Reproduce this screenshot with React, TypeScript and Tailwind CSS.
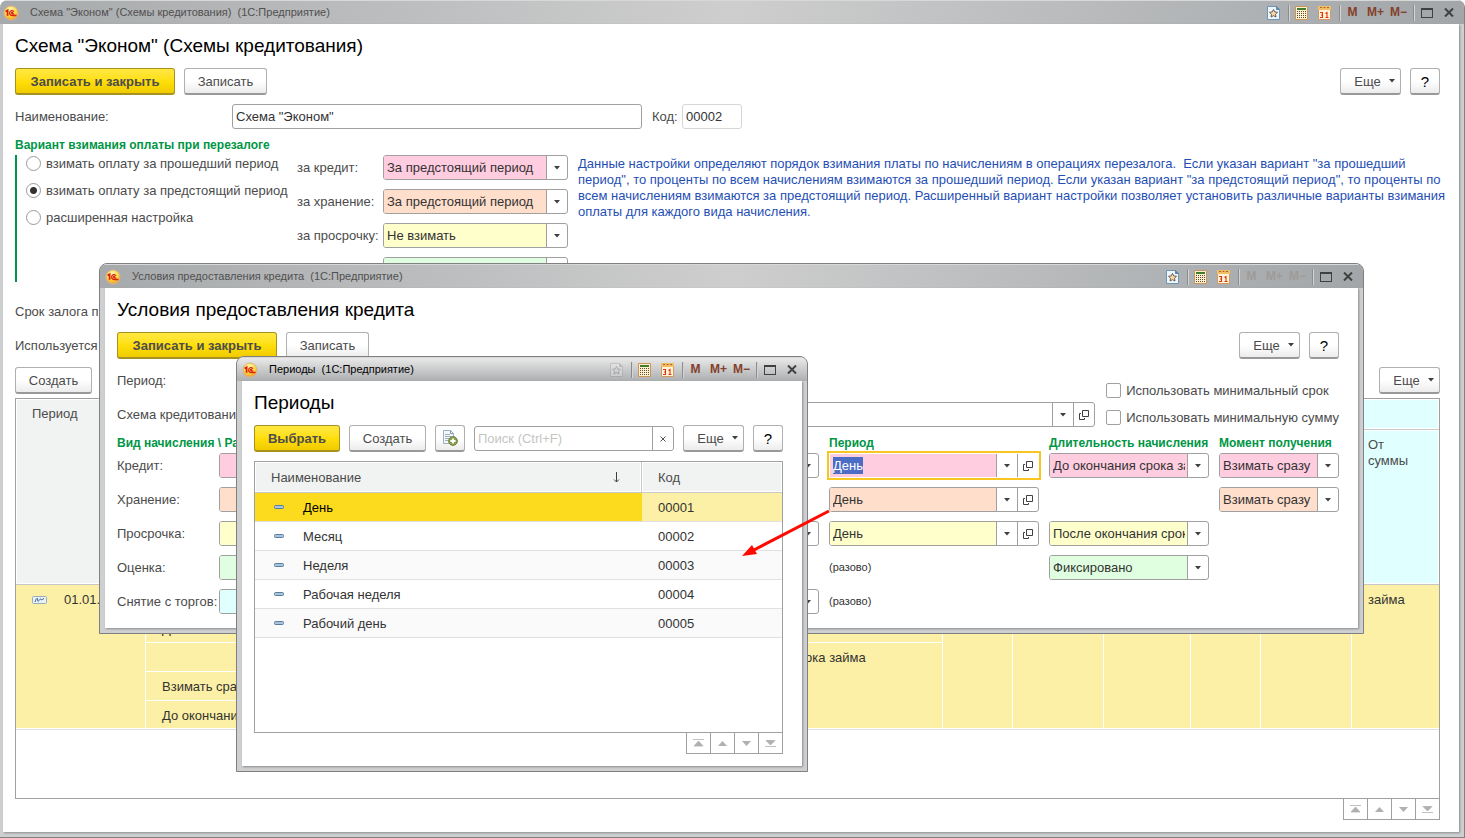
import React, { useEffect, useRef } from 'react'
import clsx from 'clsx'

type Tone = 'pink' | 'peach' | 'yellow' | 'green' | 'cyan' | 'white'

const TONES: Record<Tone, string> = {
  pink: 'bg-[#ffcce0]',
  peach: 'bg-[#ffdfcc]',
  yellow: 'bg-[#ffffcc]',
  green: 'bg-[#e0ffe0]',
  cyan: 'bg-[#e0ffff]',
  white: 'bg-white'
}

const PERIODS = [
  { code: '00001', name: 'День' },
  { code: '00002', name: 'Месяц' },
  { code: '00003', name: 'Неделя' },
  { code: '00004', name: 'Рабочая неделя' },
  { code: '00005', name: 'Рабочий день' }
]

// ---------- icons ----------

function Logo() {
  return (
    <svg className="h-4 w-4 shrink-0" viewBox="0 0 16 16" aria-hidden="true">
      <defs>
        <radialGradient id="logo" cx="0.45" cy="0.3" r="0.7">
          <stop offset="0" stopColor="#fff6c0" />
          <stop offset="0.55" stopColor="#ffdc4a" />
          <stop offset="1" stopColor="#f09a28" />
        </radialGradient>
      </defs>
      <circle cx="8" cy="8" r="7" fill="url(#logo)" stroke="#d9b489" />
      <path d="M2.6 6.6 4.6 5.4V10.8" fill="none" stroke="#d8200c" strokeWidth="1.8" />
      <path d="M11 6.8C10 4.900 6.700 5.200 6.700 8c0 1.900 1.200 2.500 2.600 2.500H13.500M10 7.700C9.300 7 8.600 7.300 8.600 8c0 .6.4.8 1 .8h1.600" fill="none" stroke="#d8200c" strokeWidth="1.3" />
    </svg>
  )
}

function StarIcon({ muted }: { muted?: boolean }) {
  return (
    <svg className={clsx('h-[14px] w-[13px]', muted && 'opacity-30 grayscale')} viewBox="0 0 13 14" aria-hidden="true">
      <path d="M.5.5h9l3 3v10H.5z" fill="#eef6fc" stroke="#6f95b5" />
      <path d="M9.5.5v3h3z" fill="#5d86ab" stroke="#5d86ab" />
      <path d="m6.5 3.4 1.2 2.5 2.8.4-2 1.9.5 2.8-2.5-1.3L4 11l.5-2.8-2-1.9 2.8-.4z" fill="#fbd9a6" stroke="#5b5148" strokeWidth="0.9" />
    </svg>
  )
}

function CalcIcon() {
  return (
    <svg className="h-[14px] w-[13px]" viewBox="0 0 13 14" aria-hidden="true">
      <path d="M.5.5h12v13H.5z" fill="#fff0cf" stroke="#c9955a" />
      <path d="M2 2h9v2H2z" fill="#3f7d2c" />
      <path d="M2 5.500h9M2 7.500h9M2 9.500h9M2 11.500h9" stroke="#5d4a33" strokeDasharray="1 1" />
    </svg>
  )
}

function CalendarIcon() {
  return (
    <svg className="h-[14px] w-[13px]" viewBox="0 0 13 14" aria-hidden="true">
      <path d="M.5 1.5h12v12H.5z" fill="#fff3da" stroke="#cf9b62" />
      <path d="M0 0h13v4H0z" fill="#f3bd66" />
      <path d="M2 1h2v1H2zM5.500 1h2v1h-2zM9 1h2v1H9z" fill="#a8672c" />
      <path d="M2 6.500h2.500v5H2M3 9h1.500M7.500 7.500l1.500-1v5M7.500 11.500h3" fill="none" stroke="#e0330f" strokeWidth="1.1" />
    </svg>
  )
}

function Caret() {
  return (
    <svg className="h-1 w-[6px] shrink-0" viewBox="0 0 6 4" aria-hidden="true">
      <path d="M0 0h6L3 3.5z" fill="#404040" />
    </svg>
  )
}

function OpenIcon() {
  return (
    <svg className="h-[10px] w-[10px]" viewBox="0 0 10 10" fill="none" stroke="#404040" aria-hidden="true">
      <path d="M3.500.5h6v6h-6zM2 3.500H.5v6h5V8" />
    </svg>
  )
}

function CopyDocIcon() {
  return (
    <svg className="h-4 w-4" viewBox="0 0 16 16" aria-hidden="true">
      <path d="M1.5.5h7l3 3v10h-10z" fill="#f3f7fa" stroke="#9db1c2" />
      <path d="M8.5.5v3h3" fill="none" stroke="#7f9ab0" />
      <path d="M3 4.5h5M3 6.5h6M3 8.5h4M3 10.5h3" stroke="#9db1c2" />
      <circle cx="11" cy="11" r="4.4" fill="#8aa04d" stroke="#6e7f45" />
      <path d="M11 8.4v5.2M8.4 11h5.2" stroke="#fff" strokeWidth="1.8" />
    </svg>
  )
}

function DashIcon() {
  return (
    <svg className="h-1 w-[10px]" viewBox="0 0 10 4" aria-hidden="true">
      <rect x="0.5" y="0.5" width="9" height="3" rx="1" fill="#a9c4da" stroke="#587d9d" />
    </svg>
  )
}

// ---------- controls ----------

interface PushButtonProps {
  children: React.ReactNode
  primary?: boolean
  className?: string
  label?: string
}

function PushButton({ children, primary, className, label }: PushButtonProps) {
  return (
    <button
      type="button"
      aria-label={label}
      className={clsx(
        'flex h-[27px] shrink-0 items-center justify-center rounded-[3px] border border-b-2 whitespace-nowrap',
        primary
          ? 'border-[#a8921f] bg-linear-to-b from-[#ffe840] via-[#ffdf0a] to-[#f0cb00] font-bold text-[#4d4d4d]'
          : 'border-[#b0b0b0] border-b-[#999] bg-linear-to-b from-white via-white to-[#ececec] text-[#4b4b4b]',
        className
      )}
    >
      {children}
    </button>
  )
}

function MoreButton() {
  return (
    <PushButton className="w-[61px] gap-2 pl-2">
      Еще <Caret />
    </PushButton>
  )
}

interface FieldProps {
  id?: string
  label?: string
  value?: string
  tone?: Tone
  className?: string
}

function SelectField({ id, label, value = '', tone = 'white', className }: FieldProps) {
  return (
    <div className={clsx('flex h-[25px] overflow-hidden rounded-[3px] border border-[#a0a0a0] bg-white', className)}>
      <select
        id={id}
        aria-label={label}
        defaultValue={value}
        className={clsx('min-w-0 flex-1 appearance-none pr-[2px] pl-[3px] text-[#333] outline-none', TONES[tone])}
      >
        <option>{value}</option>
      </select>
      <span className="pointer-events-none flex w-[21px] shrink-0 items-center justify-center border-l border-[#a0a0a0]">
        <Caret />
      </span>
    </div>
  )
}

function RefField({ id, label, value = '', tone = 'white', className, active }: FieldProps & { active?: boolean }) {
  const ref = useRef<HTMLInputElement>(null)

  useEffect(() => {
    if (active) {
      ref.current?.focus()
      ref.current?.select()
    }
  }, [active])

  return (
    <div
      className={clsx(
        'flex h-[25px] overflow-hidden border bg-white',
        active ? 'border-white outline-2 outline-[#f9c621]' : 'rounded-[3px] border-[#a0a0a0]',
        className
      )}
    >
      <input
        ref={ref}
        id={id}
        aria-label={label}
        defaultValue={value}
        className={clsx('min-w-0 flex-1 pl-[3px] text-[#333] outline-none selection:bg-[#4d6cc3] selection:text-white', TONES[tone])}
      />
      <button type="button" aria-label="Выбрать из списка" className="flex w-[21px] shrink-0 items-center justify-center border-l border-[#a0a0a0]">
        <Caret />
      </button>
      <button type="button" aria-label="Открыть" className="flex w-[21px] shrink-0 items-center justify-center border-l border-[#a0a0a0]">
        <OpenIcon />
      </button>
    </div>
  )
}

function Radio({ label, checked }: { label: string; checked?: boolean }) {
  return (
    <label className="flex h-[17px] items-center gap-[5px] whitespace-nowrap">
      <input
        type="radio"
        name="charge"
        defaultChecked={checked}
        className="h-[15px] w-[15px] shrink-0 appearance-none rounded-full border border-[#999] bg-white checked:bg-[radial-gradient(circle,#333_3px,#fff_4px)]"
      />
      {label}
    </label>
  )
}

function Check({ label }: { label: string }) {
  return (
    <label className="flex h-[27px] items-center gap-[5px] whitespace-nowrap">
      <input type="checkbox" className="h-[15px] w-[15px] shrink-0 appearance-none rounded-[2px] border border-[#a0a0a0] bg-white" />
      {label}
    </label>
  )
}

function Caption({ children }: { children: React.ReactNode }) {
  return <div className="text-[12px] leading-4 font-bold whitespace-nowrap text-[#009646]">{children}</div>
}

const PAGER = [
  { label: 'В начало', d: 'M0 .5h11M5.5 2 10 7H1z', line: true },
  { label: 'Вверх', d: 'M5.5 2 10 7H1z' },
  { label: 'Вниз', d: 'M1 2h9L5.5 7z' },
  { label: 'В конец', d: 'M0 7.5h11M1 1.5h9L5.5 6z', line: true }
]

function Pager() {
  return (
    <div className="flex justify-end">
      <div className="flex border-l border-[#a0a0a0]">
        {PAGER.map((b) => (
          <button
            key={b.label}
            type="button"
            aria-label={b.label}
            className="flex h-[21px] w-6 items-center justify-center border-r border-b border-[#a0a0a0]"
          >
            <svg className="h-2 w-[11px]" viewBox="0 0 11 8" aria-hidden="true">
              <path d={b.d} fill="#b0b0b0" stroke={b.line ? '#b0b0b0' : 'none'} strokeWidth="0.8" />
            </svg>
          </button>
        ))}
      </div>
    </div>
  )
}

// ---------- window frame ----------

const CELL = 'flex h-6 w-[23px] shrink-0 items-center justify-center'

function Separator() {
  return <span className="ml-[3px] h-4 w-[2px] border-r border-l border-r-[#d4d4d4] border-l-[#8c8c8c]" />
}

interface WindowProps {
  title: string
  active?: boolean
  mutedStar?: boolean
  mutedMemory?: boolean
  className?: string
  barClass?: string
  bodyClass?: string
  children: React.ReactNode
}

function AppWindow({ title, active, mutedStar, mutedMemory, className, barClass, bodyClass, children }: WindowProps) {
  return (
    <section
      aria-label={title}
      className={clsx('flex flex-col overflow-hidden rounded-t-lg border-[#808080] bg-[#cdcfd0]', className)}
    >
      <header
        className={clsx(
          'flex h-6 shrink-0 items-center border-t border-[#d8d8d8] pr-[5px] text-[11px]',
          active
            ? 'bg-linear-to-b from-[#e9e9e9] to-[#acaeb0] text-black'
            : 'bg-linear-to-r from-[#a7aaac] via-[#cecece] to-[#a2a6a9] text-[#505050]',
          barClass
        )}
      >
        <Logo />
        <span className="flex-1 pl-[11px] whitespace-pre">{title}</span>
        <button type="button" aria-label="Избранное" className={CELL}><StarIcon muted={mutedStar} /></button>
        <Separator />
        <button type="button" aria-label="Калькулятор" className={CELL}><CalcIcon /></button>
        <button type="button" aria-label="Календарь" className={CELL}><CalendarIcon /></button>
        <Separator />
        {['M', 'M+', 'M−'].map((m) => (
          <button key={m} type="button" className={clsx(CELL, 'text-[12px] font-bold', mutedMemory ? 'text-[#9f9b97]' : 'text-[#84402a]')}>
            {m}
          </button>
        ))}
        <Separator />
        <button type="button" aria-label="Развернуть" className={CELL}>
          <span className="h-[10px] w-3 border border-t-2 border-[#404040]" />
        </button>
        <button type="button" aria-label="Закрыть" className="flex h-6 w-[21px] items-center justify-center">
          <svg className="h-[9px] w-[10px]" viewBox="0 0 10 9" aria-hidden="true">
            <path d="m1 .5 8 8m0-8-8 8" stroke="#404040" strokeWidth="2" />
          </svg>
        </button>
      </header>
      <div className={clsx('flex flex-1 flex-col bg-white shadow-[1px_1px_2px_#8a8d90]', bodyClass)}>{children}</div>
    </section>
  )
}

// ---------- main form ----------

const CHARGES: { id: string; label?: string; value: string; tone: Tone }[] = [
  { id: 'credit', label: 'за кредит:', value: 'За предстоящий период', tone: 'pink' },
  { id: 'storage', label: 'за хранение:', value: 'За предстоящий период', tone: 'peach' },
  { id: 'overdue', label: 'за просрочку:', value: 'Не взимать', tone: 'yellow' },
  { id: 'estimate', value: '', tone: 'green' }
]

function TermsTable() {
  const head = 'border-r border-b border-[#c8c8c8] p-0 align-top font-normal shadow-[inset_0_0_0_1px_#fff]'
  const cell = 'border-r border-b border-white p-0 align-top'
  return (
    <div className="flex-1 border border-[#a0a0a0]">
      <table className="w-full table-fixed border-separate border-spacing-0 text-left leading-4">
        <colgroup>
          <col className="w-[130px]" />
          <col className="w-[543px]" />
          <col />
          <col className="w-[70px]" />
          <col className="w-[91px]" />
          <col className="w-[87px]" />
          <col className="w-[70px]" />
          <col className="w-[91px]" />
          <col className="w-[87px]" />
        </colgroup>
        <thead className="text-[#4b4b4b]">
          <tr className="h-[31px]">
            <th rowSpan={2} className={clsx(head, 'bg-[#f1f3f2]')}>
              <div className="pt-[7px] pl-4">Период</div>
            </th>
            <th colSpan={2} rowSpan={2} className={clsx(head, 'bg-[#f1f3f2]')} />
            <th colSpan={6} className={clsx(head, 'border-r-0 bg-[#e0ffff]')} />
          </tr>
          <tr className="h-[155px]">
            {[0, 1, 2, 3, 4].map((i) => (
              <th key={i} className={clsx(head, 'bg-[#e0ffff]')} />
            ))}
            <th className={clsx(head, 'border-r-0 bg-[#e0ffff]')}>
              <div className="pt-[7px] pl-4">От<br />суммы</div>
            </th>
          </tr>
        </thead>
        <tbody className="bg-[#fcf0a6] text-[#333]">
          <tr className="h-[29px]">
            <td rowSpan={5} className={cell}>
              <div className="flex items-center gap-[17px] pt-[7px] pl-4">
                <svg className="h-2 w-[15px]" viewBox="0 0 15 8" aria-hidden="true">
                  <rect x="0.5" y="0.5" width="14" height="7" rx="1" fill="#e9f1f7" stroke="#9badbb" />
                  <path d="M3 6c1-3 2-4 2.500-3.500S5 6 6.500 5 8.500 2 9 3s0 1.500 3-.5" fill="none" stroke="#2f5f86" />
                </svg>
                01.01.
              </div>
            </td>
            <td className={cell} />
            <td className={cell} />
            <td rowSpan={5} className={cell} />
            <td rowSpan={5} className={cell} />
            <td rowSpan={5} className={cell} />
            <td rowSpan={5} className={cell} />
            <td rowSpan={5} className={cell} />
            <td rowSpan={5} className={clsx(cell, 'border-r-0')}>
              <div className="pt-[7px] pl-4">займа</div>
            </td>
          </tr>
          <tr className="h-[29px]">
            <td className={cell}><div className="pt-[7px] pl-4">До окончания</div></td>
            <td className={cell} />
          </tr>
          <tr className="h-[29px]">
            <td className={cell} />
            <td rowSpan={3} className={cell}><div className="pt-[7px] pl-4">До окончания срока займа</div></td>
          </tr>
          <tr className="h-[29px]">
            <td className={cell}><div className="pt-[7px] pl-4">Взимать сразу</div></td>
          </tr>
          <tr className="h-7">
            <td className={cell}><div className="pt-[7px] pl-4">До окончания срока займа</div></td>
          </tr>
        </tbody>
      </table>
      <div className="border-t border-[#e0e0e0]" />
    </div>
  )
}

function SchemeWindow() {
  return (
    <AppWindow
      title={'Схема "Эконом" (Схемы кредитования)  (1С:Предприятие)'}
      className="min-h-screen border-r border-b"
      barClass="pl-[3px]"
      bodyClass="mb-[5px] ml-[3px] mr-[5px] pl-3 pr-[19px] pb-3"
    >
      <h1 className="mt-[10px] text-[19px] leading-6 text-black">Схема "Эконом" (Схемы кредитования)</h1>

      <div className="mt-[10px] flex gap-[9px]">
        <PushButton primary className="w-[160px]">Записать и закрыть</PushButton>
        <PushButton className="w-[83px]">Записать</PushButton>
        <span className="flex-1" />
        <MoreButton />
        <PushButton className="w-[30px] text-[15px] text-black">?</PushButton>
      </div>

      <div className="mt-[9px] flex items-center">
        <label htmlFor="name" className="w-[217px]">Наименование:</label>
        <input id="name" defaultValue={'Схема "Эконом"'} className="h-[25px] w-[410px] rounded-[3px] border border-[#a0a0a0] pl-[3px] text-[#333]" />
        <label htmlFor="code" className="w-10 pl-[10px]">Код:</label>
        <input id="code" readOnly defaultValue="00002" className="h-[25px] w-[60px] rounded-[3px] border border-[#d6d6d6] pl-[3px] text-[#333]" />
      </div>

      <div className="mt-2">
        <Caption>Вариант взимания оплаты при перезалоге</Caption>
      </div>
      <div className="mt-[2px] flex border-l-2 border-[#009646]">
        <div className="flex w-[280px] shrink-0 flex-col gap-[10px] pl-[9px]">
          <Radio label="взимать оплату за прошедший период" />
          <Radio label="взимать оплату за предстоящий период" checked />
          <Radio label="расширенная настройка" />
        </div>
        <div className="flex shrink-0 flex-col gap-[9px]">
          {CHARGES.map((c) => (
            <div key={c.id} className="flex items-center">
              <label htmlFor={c.id} className="w-[86px] whitespace-nowrap">{c.label}</label>
              <SelectField id={c.id} value={c.value} tone={c.tone} className="w-[185px]" />
            </div>
          ))}
        </div>
        <p className="-mr-2 flex-1 pt-px pl-[10px] leading-4 whitespace-pre-wrap text-[#1f4fb5]">
          {'Данные настройки определяют порядок взимания платы по начислениям в операциях перезалога.  Если указан вариант "за прошедший период", то проценты по всем начислениям взимаются за прошедший период. Если указан вариант "за предстоящий период", то проценты по всем начислениям взимаются за предстоящий период. Расширенный вариант настройки позволяет установить различные варианты взимания оплаты для каждого вида начисления.'}
        </p>
      </div>

      <div className="mt-[17px] flex flex-col gap-[9px]">
        <div className="h-[25px] leading-[25px]">Срок залога по</div>
        <div className="h-[25px] leading-[25px]">Используется</div>
      </div>

      <div className="mt-[9px] mb-1 flex justify-between">
        <PushButton className="w-[77px]">Создать</PushButton>
        <MoreButton />
      </div>
      <TermsTable />
      <Pager />
    </AppWindow>
  )
}

// ---------- terms dialog ----------

interface TermRow {
  label: string
  tone: Tone
  extra?: boolean
  period?: string
  duration?: string
  moment?: string
}

const TERMS: TermRow[] = [
  { label: 'Кредит:', tone: 'pink', extra: true, period: 'День', duration: 'До окончания срока займа', moment: 'Взимать сразу' },
  { label: 'Хранение:', tone: 'peach', period: 'День', moment: 'Взимать сразу' },
  { label: 'Просрочка:', tone: 'yellow', extra: true, period: 'День', duration: 'После окончания срока' },
  { label: 'Оценка:', tone: 'green', duration: 'Фиксировано' },
  { label: 'Снятие с торгов:', tone: 'cyan', extra: true }
]

function TermsDialog() {
  return (
    <AppWindow
      title="Условия предоставления кредита  (1С:Предприятие)"
      mutedMemory
      className="absolute top-[263px] left-[99px] w-[1265px] border"
      barClass="pl-[5px]"
      bodyClass="mx-[5px] mb-[5px] pl-3 pr-[19px] pb-[14px]"
    >
      <h2 className="mt-[10px] text-[19px] leading-6 text-black">Условия предоставления кредита</h2>
      <div className="mt-[10px] flex gap-[9px]">
        <PushButton primary className="w-[160px]">Записать и закрыть</PushButton>
        <PushButton className="w-[83px]">Записать</PushButton>
        <span className="flex-1" />
        <MoreButton />
        <PushButton className="w-[30px] text-[15px] text-black">?</PushButton>
      </div>

      <div className="mt-[9px] flex gap-[11px]">
        <div className="flex flex-1 flex-col gap-[9px]">
          <div className="h-[25px] leading-[25px]">Период:</div>
          <div className="flex items-center">
            <label htmlFor="scheme" className="w-[130px] whitespace-nowrap">Схема кредитования:</label>
            <RefField id="scheme" className="flex-1" />
          </div>
        </div>
        <div className="mt-[9px]">
          <Check label="Использовать минимальный срок" />
          <Check label="Использовать минимальную сумму" />
        </div>
      </div>

      <div className="mt-1 grid grid-cols-[92px_1fr_210px_160px_120px] gap-x-[10px]">
        <div className="col-span-2"><Caption>Вид начисления \ Размер</Caption></div>
        <Caption>Период</Caption>
        <Caption>Длительность начисления</Caption>
        <Caption>Момент получения</Caption>
      </div>
      <div className="mt-[2px] grid grid-cols-[92px_1fr_210px_160px_120px] items-center gap-x-[10px] gap-y-[9px]">
        {TERMS.map((t, i) => (
          <React.Fragment key={t.label}>
            <label htmlFor={`term-${i}`} className="whitespace-nowrap">{t.label}</label>
            <div className="flex h-[25px] justify-between">
              <SelectField id={`term-${i}`} tone={t.tone} className="w-[280px]" />
              {t.extra && <SelectField label="Размер" tone={t.tone} className="w-[280px]" />}
            </div>
            {t.period
              ? <RefField label="Период" value={t.period} tone={t.tone} active={i === 0} />
              : <span className="text-[11px] text-[#333]">(разово)</span>}
            {t.duration ? <SelectField label="Длительность начисления" value={t.duration} tone={t.tone} /> : <span />}
            {t.moment ? <SelectField label="Момент получения" value={t.moment} tone={t.tone} /> : <span />}
          </React.Fragment>
        ))}
      </div>
    </AppWindow>
  )
}

// ---------- periods list ----------

function PeriodsDialog() {
  return (
    <AppWindow
      title="Периоды  (1С:Предприятие)"
      active
      mutedStar
      className="absolute top-[356px] left-[236px] w-[572px] border"
      barClass="pl-[5px]"
      bodyClass="mx-[5px] mb-[5px] pl-3 pr-[19px] pb-3"
    >
      <h2 className="mt-[10px] text-[19px] leading-6 text-black">Периоды</h2>
      <div className="mt-[10px] flex items-start gap-[9px]">
        <PushButton primary className="w-[86px]">Выбрать</PushButton>
        <PushButton className="w-[77px]">Создать</PushButton>
        <PushButton className="w-[30px]" label="Скопировать"><CopyDocIcon /></PushButton>
        <div className="mt-px flex h-[25px] min-w-0 flex-1 rounded-[3px] border border-[#a0a0a0]">
          <input aria-label="Поиск" placeholder="Поиск (Ctrl+F)" className="min-w-0 flex-1 pl-[3px] placeholder:text-[#c3c6c3]" />
          <button type="button" aria-label="Очистить" className="flex w-[21px] shrink-0 items-center justify-center border-l border-[#a0a0a0]">
            <svg className="h-[6px] w-[6px]" viewBox="0 0 6 6" aria-hidden="true">
              <path d="m.5.5 5 5m0-5-5 5" stroke="#505050" />
            </svg>
          </button>
        </div>
        <MoreButton />
        <PushButton className="w-[30px] text-[15px] text-black">?</PushButton>
      </div>

      <div className="mt-[9px] h-[272px] border border-[#a0a0a0]">
        <table className="w-full table-fixed border-separate border-spacing-0 text-left">
          <colgroup>
            <col />
            <col className="w-[140px]" />
          </colgroup>
          <thead className="bg-[#f1f3f2] text-[#4b4b4b]">
            <tr className="h-[31px]">
              <th className="border-r border-b border-[#c8c8c8] p-0 font-normal shadow-[inset_0_0_0_1px_#fff]">
                <div className="flex items-center justify-between pr-[21px] pl-4">
                  Наименование
                  <svg className="h-[11px] w-[7px]" viewBox="0 0 7 11" fill="none" stroke="#404040" aria-hidden="true">
                    <path d="M3.500 0v10M1 7.500 3.500 10 6 7.500" />
                  </svg>
                </div>
              </th>
              <th className="border-b border-[#c8c8c8] p-0 pl-4 font-normal shadow-[inset_0_0_0_1px_#fff]">Код</th>
            </tr>
          </thead>
          <tbody>
            {PERIODS.map((p, i) => (
              <tr key={p.code} className={clsx('h-[29px]', i === 0 ? 'text-black' : 'text-[#333]', i > 0 && i % 2 === 0 && 'bg-[#fafafa]')}>
                <td className={clsx('border-b border-[#e0e0e0] p-0', i === 0 && 'bg-[#fcdb1f]')}>
                  <div className="flex items-center gap-[19px] pl-[19px]">
                    <DashIcon />
                    {p.name}
                  </div>
                </td>
                <td className={clsx('border-b border-[#e0e0e0] p-0 pl-4 text-[#333]', i === 0 && 'bg-[#fcf0a6]')}>{p.code}</td>
              </tr>
            ))}
          </tbody>
        </table>
      </div>
      <Pager />
    </AppWindow>
  )
}

export default function App() {
  return (
    <main className="relative min-h-screen overflow-hidden bg-white font-['Liberation_Sans',Arial,sans-serif] text-[13px] leading-[17px] text-[#4b4b4b]">
      <SchemeWindow />
      <TermsDialog />
      <PeriodsDialog />
      {/* pointer from the period field to the list */}
      <svg className="pointer-events-none absolute top-[508px] left-[740px] h-[50px] w-[92px]" viewBox="0 0 92 50" aria-hidden="true">
        <path d="M89 3 12 43" stroke="#ff0a00" strokeWidth="3" />
        <path d="M2 48 12 37 17 46z" fill="#ff0a00" />
      </svg>
    </main>
  )
}
